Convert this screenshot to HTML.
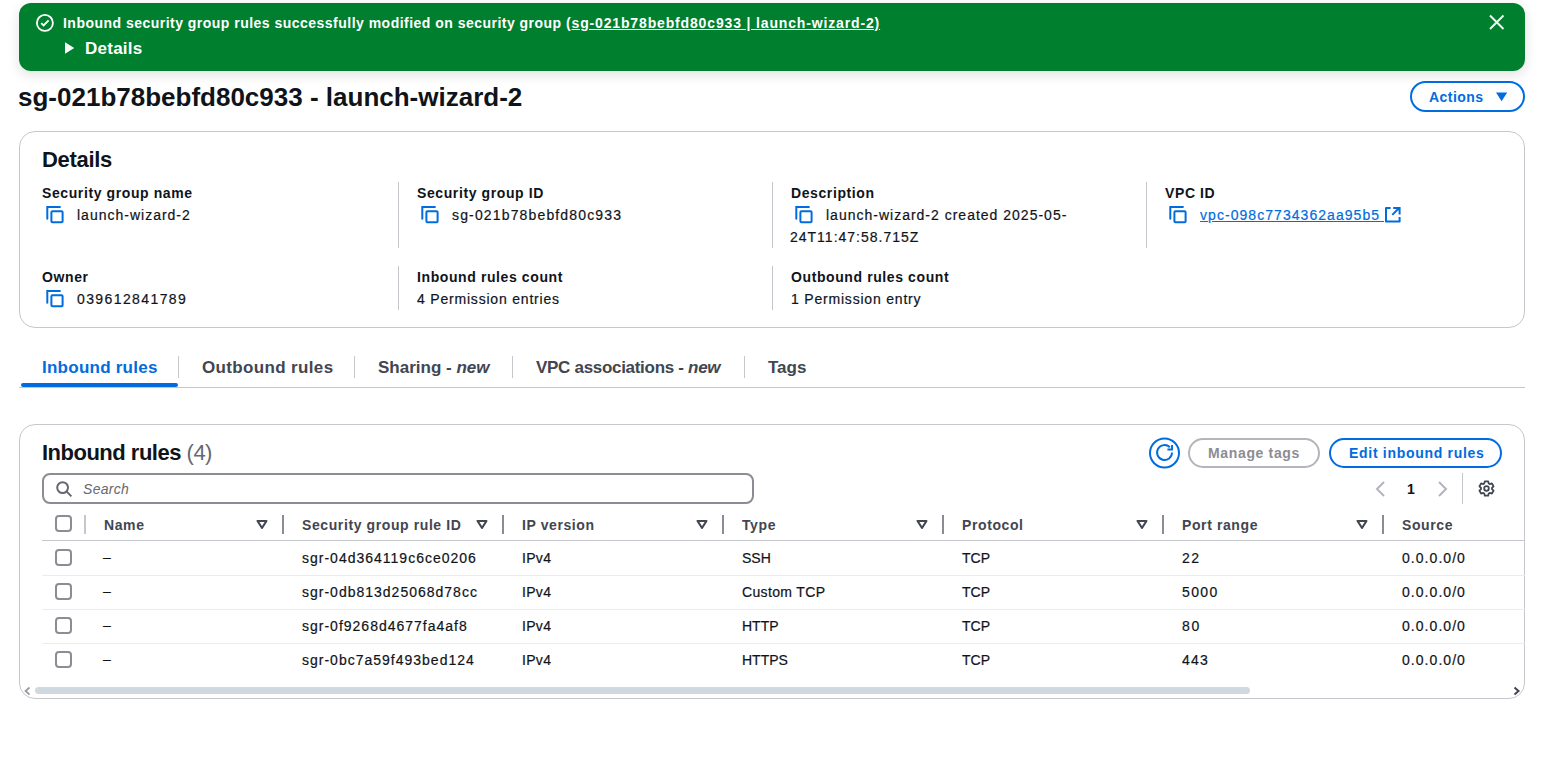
<!DOCTYPE html>
<html><head><meta charset="utf-8"><title>sg-021b78bebfd80c933 - launch-wizard-2</title>
<style>
*{box-sizing:border-box;margin:0;padding:0}
html,body{width:1543px;height:772px;overflow:hidden;background:#fff}
body{position:relative;font-family:"Liberation Sans",sans-serif;color:#0f141a;font-size:14px;line-height:20px}
.a{position:absolute;white-space:nowrap}
.r{font-size:14px;line-height:20px;font-weight:400;letter-spacing:1px;-webkit-text-stroke:.2px currentColor}
.b{font-size:14px;line-height:20px;font-weight:700;letter-spacing:.6px}
.h17{font-size:17px;line-height:20px;font-weight:700}
.h21{font-size:21px;line-height:24px;font-weight:700}
svg{position:absolute;overflow:visible}
#flash{position:absolute;left:19px;top:3px;width:1506px;height:68px;background:#00802f;border-radius:12px;box-shadow:0 4px 12px 1px rgba(0,7,22,.10)}
.box{position:absolute;border:1px solid #c6c6cd;border-radius:16px;background:#fff}
.vsep{position:absolute;width:1px;background:#c6c6cd}
.btn{position:absolute;border:2px solid #006ce0;border-radius:20px;background:#fff}
.lnk{color:#006ce0}
.tab{color:#424650}
.th{color:#424650}
.cb{position:absolute;width:17px;height:17px;border:2px solid #8c8c94;border-radius:4px;background:#fff}
.hl{position:absolute;height:1px;background:#c6c6cd}
.rl{position:absolute;height:1px;background:#ebebf0}
</style></head>
<body>

<!-- Flashbar -->
<div id="flash"></div>
<svg style="left:36px;top:14px" width="18" height="18" viewBox="0 0 18 18"><circle cx="8.9" cy="8.9" r="8" fill="none" stroke="#fff" stroke-width="1.8"/><path d="M5.2 9.1l2.4 2.4 5-5.2" fill="none" stroke="#fff" stroke-width="1.9"/></svg>
<div class="a b" style="left:63px;top:13px;color:#fff;letter-spacing:.48px">Inbound security group rules successfully modified on security group <span style="letter-spacing:.85px">(<span style="text-decoration:underline">sg-021b78bebfd80c933 | launch-wizard-2)</span></span></div>
<svg style="left:65px;top:42px" width="10" height="12" viewBox="0 0 10 12"><path d="M0 0.3L9.2 6 0 11.7z" fill="#fff"/></svg>
<div class="a h17" style="left:85px;top:39px;color:#fff;letter-spacing:.25px">Details</div>
<svg style="left:1488px;top:14px" width="17" height="17" viewBox="0 0 17 17"><path d="M2 1.5l13.5 13.5M15.5 1.5L2 15" stroke="#f2f3f3" stroke-width="2" fill="none"/></svg>

<!-- Title -->
<div class="a" style="left:18px;top:82px;font-size:26px;line-height:30px;font-weight:700">sg-021b78bebfd80c933 - launch-wizard-2</div>
<div class="btn" style="left:1410px;top:81px;width:115px;height:31px"></div>
<div class="a b lnk" style="left:1429px;top:87px;letter-spacing:.45px">Actions</div>
<svg style="left:1496px;top:92px" width="12" height="10" viewBox="0 0 12 10"><path d="M0 0.5h11.2L5.6 9.2z" fill="#006ce0"/></svg>

<!-- Details container -->
<div class="box" style="left:19px;top:131px;width:1506px;height:197px"></div>
<div class="a h21" style="left:42px;top:148px;font-size:22px;letter-spacing:-.3px">Details</div>

<div class="a b" style="left:42px;top:183px">Security group name</div>
<div class="a r" style="left:77px;top:205px">launch-wizard-2</div>
<div class="a b" style="left:42px;top:267px">Owner</div>
<div class="a r" style="left:77px;top:289px;letter-spacing:1.4px">039612841789</div>

<div class="vsep" style="left:398px;top:182px;height:66px"></div>
<div class="vsep" style="left:398px;top:266px;height:44px"></div>
<div class="a b" style="left:417px;top:183px">Security group ID</div>
<div class="a r" style="left:452px;top:205px;letter-spacing:1.15px">sg-021b78bebfd80c933</div>
<div class="a b" style="left:417px;top:267px">Inbound rules count</div>
<div class="a r" style="left:417px;top:289px;letter-spacing:.8px">4 Permission entries</div>

<div class="vsep" style="left:772px;top:182px;height:66px"></div>
<div class="vsep" style="left:772px;top:266px;height:44px"></div>
<div class="a b" style="left:791px;top:183px">Description</div>
<div class="a r" style="left:826px;top:205px">launch-wizard-2 created 2025-05-</div>
<div class="a r" style="left:790px;top:227px">24T11:47:58.715Z</div>
<div class="a b" style="left:791px;top:267px">Outbound rules count</div>
<div class="a r" style="left:791px;top:289px;letter-spacing:.8px">1 Permission entry</div>

<div class="vsep" style="left:1146px;top:182px;height:66px"></div>
<div class="a b" style="left:1165px;top:183px">VPC ID</div>
<div class="a r lnk" style="left:1200px;top:205px;letter-spacing:1.05px;text-decoration:underline">vpc-098c7734362aa95b5<span style="letter-spacing:0">&nbsp;</span></div>

<svg style="left:46px;top:206px" width="20" height="20" viewBox="0 0 20 20"><path d="M1.3 12.7V1H13.9" fill="none" stroke="#006ce0" stroke-width="2" stroke-linecap="round"/><rect x="5.4" y="5.3" width="11.2" height="11" rx="1" fill="none" stroke="#006ce0" stroke-width="2"/></svg><svg style="left:421px;top:206px" width="20" height="20" viewBox="0 0 20 20"><path d="M1.3 12.7V1H13.9" fill="none" stroke="#006ce0" stroke-width="2" stroke-linecap="round"/><rect x="5.4" y="5.3" width="11.2" height="11" rx="1" fill="none" stroke="#006ce0" stroke-width="2"/></svg><svg style="left:795px;top:206px" width="20" height="20" viewBox="0 0 20 20"><path d="M1.3 12.7V1H13.9" fill="none" stroke="#006ce0" stroke-width="2" stroke-linecap="round"/><rect x="5.4" y="5.3" width="11.2" height="11" rx="1" fill="none" stroke="#006ce0" stroke-width="2"/></svg><svg style="left:1169px;top:206px" width="20" height="20" viewBox="0 0 20 20"><path d="M1.3 12.7V1H13.9" fill="none" stroke="#006ce0" stroke-width="2" stroke-linecap="round"/><rect x="5.4" y="5.3" width="11.2" height="11" rx="1" fill="none" stroke="#006ce0" stroke-width="2"/></svg><svg style="left:46px;top:290px" width="20" height="20" viewBox="0 0 20 20"><path d="M1.3 12.7V1H13.9" fill="none" stroke="#006ce0" stroke-width="2" stroke-linecap="round"/><rect x="5.4" y="5.3" width="11.2" height="11" rx="1" fill="none" stroke="#006ce0" stroke-width="2"/></svg>
<svg style="left:1385px;top:207px" width="16" height="16" viewBox="0 0 16 16"><path d="M5.6 1H1v13.4h13.6V10.1" fill="none" stroke="#006ce0" stroke-width="2" stroke-linejoin="round"/><path d="M8.2 1h6.4v6.6M7.3 7.9l6.6-6.6" fill="none" stroke="#006ce0" stroke-width="2"/></svg>
<!-- Tabs -->
<div class="a h17 lnk" style="left:42px;top:358px;letter-spacing:.25px">Inbound rules</div>
<div class="vsep" style="left:178px;top:356px;height:22px"></div>
<div class="a h17 tab" style="left:202px;top:358px;letter-spacing:.35px">Outbound rules</div>
<div class="vsep" style="left:354px;top:356px;height:22px"></div>
<div class="a h17 tab" style="left:378px;top:358px">Sharing - <i>new</i></div>
<div class="vsep" style="left:512px;top:356px;height:22px"></div>
<div class="a h17 tab" style="left:536px;top:358px;letter-spacing:-.3px">VPC associations - <i>new</i></div>
<div class="vsep" style="left:744px;top:356px;height:22px"></div>
<div class="a h17 tab" style="left:768px;top:358px">Tags</div>
<div class="hl" style="left:19px;top:387px;width:1506px"></div>
<div style="position:absolute;left:21px;top:383px;width:157px;height:4px;border-radius:2px;background:#006ce0"></div>

<!-- Inbound rules container -->
<div class="box" style="left:19px;top:424px;width:1506px;height:275px;overflow:hidden" id="tbl"></div>
<div class="a h21" style="left:42px;top:441px;font-size:22px;letter-spacing:-.5px">Inbound rules <span style="font-weight:400;color:#656871">(4)</span></div>

<svg style="left:1149px;top:438px" width="31" height="31" viewBox="0 0 31 31"><circle cx="15.5" cy="15" r="14.5" fill="#fff" stroke="#006ce0" stroke-width="2"/></svg><svg style="left:1155.9px;top:444.4px" width="17.1" height="17.1" viewBox="0 0 16 16"><path d="M15 8A7 7 0 1 1 12.95 3.05" fill="none" stroke="#006ce0" stroke-width="1.8"/><path d="M15 1v4.1h-4.3" fill="none" stroke="#006ce0" stroke-width="1.8"/></svg>
<div class="btn" style="left:1188px;top:438px;width:132px;height:30px;border-color:#b4b4bb"></div>
<div class="a b" style="left:1208px;top:443px;color:#8c8c94;letter-spacing:.65px">Manage tags</div>
<div class="btn" style="left:1329px;top:438px;width:173px;height:30px"></div>
<div class="a b lnk" style="left:1349px;top:443px;letter-spacing:.7px">Edit inbound rules</div>
<div style="position:absolute;left:42px;top:473px;width:712px;height:31px;border:2px solid #8c8c94;border-radius:8px"></div>
<svg style="left:55px;top:480px" width="18" height="18" viewBox="0 0 18 18"><circle cx="7.6" cy="7.6" r="5.4" fill="none" stroke="#656871" stroke-width="2"/><path d="M11.4 11.4l5 5" stroke="#656871" stroke-width="2"/></svg>
<div class="a" style="left:83px;top:479px;font-style:italic;color:#656871;letter-spacing:.3px">Search</div>
<svg style="left:1375px;top:481px" width="12" height="16" viewBox="0 0 12 16"><path d="M9 1L2 8l7 7" fill="none" stroke="#b4b4bb" stroke-width="2"/></svg>
<div class="a" style="left:1407px;top:479px;font-weight:700">1</div>
<svg style="left:1437px;top:481px" width="12" height="16" viewBox="0 0 12 16"><path d="M2 1l7 7-7 7" fill="none" stroke="#b4b4bb" stroke-width="2"/></svg>
<div class="vsep" style="left:1462px;top:473px;height:31px"></div>
<svg style="left:1477px;top:479px" width="19" height="19" viewBox="0 0 19 19"><path d="M7.26 4.48 L7.84 2.29 L11.16 2.29 L11.74 4.48 L12.73 5.05 L14.91 4.45 L16.58 7.34 L14.97 8.93 L14.97 10.07 L16.58 11.66 L14.91 14.55 L12.73 13.95 L11.74 14.52 L11.16 16.71 L7.84 16.71 L7.26 14.52 L6.27 13.95 L4.09 14.55 L2.42 11.66 L4.03 10.07 L4.03 8.93 L2.42 7.34 L4.09 4.45 L6.27 5.05Z" fill="none" stroke="#424650" stroke-width="1.8" stroke-linejoin="round"/><circle cx="9.5" cy="9.5" r="2.3" fill="none" stroke="#424650" stroke-width="1.8"/></svg>
<div class="cb" style="left:55px;top:515px"></div>
<div style="position:absolute;left:84px;top:515px;width:2px;height:19px;background:#c6c6cd"></div>
<div class="a b th" style="left:104px;top:515px">Name</div>
<svg style="left:256px;top:519px" width="12" height="11" viewBox="0 0 12 11"><path d="M1.5 1.9h9L6 9z" fill="none" stroke="#424650" stroke-width="2" stroke-linejoin="round"/></svg>
<div style="position:absolute;left:282px;top:515px;width:2px;height:19px;background:#8c8c94"></div>
<div class="a b th" style="left:302px;top:515px">Security group rule ID</div>
<svg style="left:476px;top:519px" width="12" height="11" viewBox="0 0 12 11"><path d="M1.5 1.9h9L6 9z" fill="none" stroke="#424650" stroke-width="2" stroke-linejoin="round"/></svg>
<div style="position:absolute;left:502px;top:515px;width:2px;height:19px;background:#8c8c94"></div>
<div class="a b th" style="left:522px;top:515px">IP version</div>
<svg style="left:696px;top:519px" width="12" height="11" viewBox="0 0 12 11"><path d="M1.5 1.9h9L6 9z" fill="none" stroke="#424650" stroke-width="2" stroke-linejoin="round"/></svg>
<div style="position:absolute;left:722px;top:515px;width:2px;height:19px;background:#8c8c94"></div>
<div class="a b th" style="left:742px;top:515px">Type</div>
<svg style="left:916px;top:519px" width="12" height="11" viewBox="0 0 12 11"><path d="M1.5 1.9h9L6 9z" fill="none" stroke="#424650" stroke-width="2" stroke-linejoin="round"/></svg>
<div style="position:absolute;left:942px;top:515px;width:2px;height:19px;background:#8c8c94"></div>
<div class="a b th" style="left:962px;top:515px">Protocol</div>
<svg style="left:1136px;top:519px" width="12" height="11" viewBox="0 0 12 11"><path d="M1.5 1.9h9L6 9z" fill="none" stroke="#424650" stroke-width="2" stroke-linejoin="round"/></svg>
<div style="position:absolute;left:1162px;top:515px;width:2px;height:19px;background:#8c8c94"></div>
<div class="a b th" style="left:1182px;top:515px">Port range</div>
<svg style="left:1356px;top:519px" width="12" height="11" viewBox="0 0 12 11"><path d="M1.5 1.9h9L6 9z" fill="none" stroke="#424650" stroke-width="2" stroke-linejoin="round"/></svg>
<div style="position:absolute;left:1382px;top:515px;width:2px;height:19px;background:#8c8c94"></div>
<div class="a b th" style="left:1402px;top:515px">Source</div>
<svg style="left:1576px;top:519px" width="12" height="11" viewBox="0 0 12 11"><path d="M1.5 1.9h9L6 9z" fill="none" stroke="#424650" stroke-width="2" stroke-linejoin="round"/></svg>
<div style="position:absolute;left:1602px;top:515px;width:2px;height:19px;background:#8c8c94"></div>
<div class="hl" style="left:42px;top:540px;width:1483px"></div>
<div class="cb" style="left:55px;top:549px"></div>
<div class="a r" style="left:103px;top:547px;letter-spacing:0px">–</div>
<div class="a r" style="left:302px;top:548px">sgr-04d364119c6ce0206</div>
<div class="a r" style="left:522px;top:548px;letter-spacing:0.3px">IPv4</div>
<div class="a r" style="left:742px;top:548px;letter-spacing:0px">SSH</div>
<div class="a r" style="left:962px;top:548px;letter-spacing:0px">TCP</div>
<div class="a r" style="left:1182px;top:548px;letter-spacing:1.5px">22</div>
<div class="a r" style="left:1402px;top:548px;letter-spacing:1.05px">0.0.0.0/0</div>
<div class="rl" style="left:42px;top:575px;width:1483px"></div>
<div class="cb" style="left:55px;top:583px"></div>
<div class="a r" style="left:103px;top:581px;letter-spacing:0px">–</div>
<div class="a r" style="left:302px;top:582px">sgr-0db813d25068d78cc</div>
<div class="a r" style="left:522px;top:582px;letter-spacing:0.3px">IPv4</div>
<div class="a r" style="left:742px;top:582px;letter-spacing:0.35px">Custom TCP</div>
<div class="a r" style="left:962px;top:582px;letter-spacing:0px">TCP</div>
<div class="a r" style="left:1182px;top:582px;letter-spacing:1.4px">5000</div>
<div class="a r" style="left:1402px;top:582px;letter-spacing:1.05px">0.0.0.0/0</div>
<div class="rl" style="left:42px;top:609px;width:1483px"></div>
<div class="cb" style="left:55px;top:617px"></div>
<div class="a r" style="left:103px;top:615px;letter-spacing:0px">–</div>
<div class="a r" style="left:302px;top:616px">sgr-0f9268d4677fa4af8</div>
<div class="a r" style="left:522px;top:616px;letter-spacing:0.3px">IPv4</div>
<div class="a r" style="left:742px;top:616px;letter-spacing:0px">HTTP</div>
<div class="a r" style="left:962px;top:616px;letter-spacing:0px">TCP</div>
<div class="a r" style="left:1182px;top:616px;letter-spacing:1.6px">80</div>
<div class="a r" style="left:1402px;top:616px;letter-spacing:1.05px">0.0.0.0/0</div>
<div class="rl" style="left:42px;top:643px;width:1483px"></div>
<div class="cb" style="left:55px;top:651px"></div>
<div class="a r" style="left:103px;top:649px;letter-spacing:0px">–</div>
<div class="a r" style="left:302px;top:650px">sgr-0bc7a59f493bed124</div>
<div class="a r" style="left:522px;top:650px;letter-spacing:0.3px">IPv4</div>
<div class="a r" style="left:742px;top:650px;letter-spacing:0px">HTTPS</div>
<div class="a r" style="left:962px;top:650px;letter-spacing:0px">TCP</div>
<div class="a r" style="left:1182px;top:650px;letter-spacing:1.25px">443</div>
<div class="a r" style="left:1402px;top:650px;letter-spacing:1.05px">0.0.0.0/0</div>
<div style="position:absolute;left:35px;top:687px;width:1215px;height:7px;border-radius:4px;background:#d1d9e0"></div>
<svg style="left:23px;top:686px" width="9" height="10" viewBox="0 0 9 10"><path d="M6.5 1.5L2.5 5l4 3.5" fill="none" stroke="#9a9aa2" stroke-width="1.7"/></svg>
<svg style="left:1512px;top:686px" width="9" height="10" viewBox="0 0 9 10"><path d="M2.5 1.5L6.5 5l-4 3.5" fill="none" stroke="#424650" stroke-width="2"/></svg>
</body></html>
